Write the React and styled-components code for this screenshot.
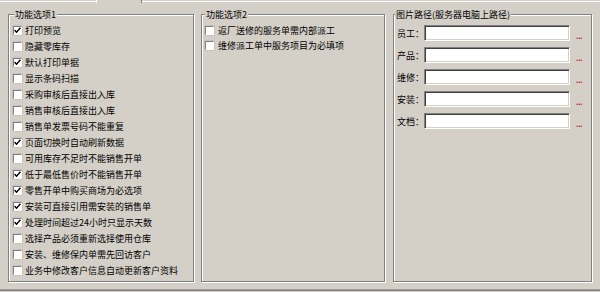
import React from 'react';
import styled, { createGlobalStyle } from 'styled-components';

const GlobalStyle = createGlobalStyle`
  html, body {
    margin: 0;
    padding: 0;
    background: #d4d0c8;
  }
  body {
    font-family: "Noto Sans CJK SC", "Liberation Sans", sans-serif;
    font-size: 9px;
    color: #000;
  }
`;

const Page = styled.div`
  width: 600px;
  height: 292px;
  background: #d4d0c8;
  display: flex;
  flex-direction: column;
  overflow: hidden;
`;

const TabEdge = styled.div`
  display: flex;
  height: 3px;
`;

const TabLine = styled.div`
  width: ${p => (p.$w ? `${p.$w}px` : 'auto')};
  flex: ${p => (p.$w ? 'none' : '1')};
  border-top: 1px solid #fff;
  margin-top: 1px;
`;

const TabGap = styled.div`
  width: 44px;
  border-left: 1px solid #fff;
  border-right: 1px solid #808080;
`;

const Groups = styled.div`
  display: flex;
  padding: 11px 0 0 8px;
  gap: 7px;
`;

const Group = styled.div`
  position: relative;
  box-sizing: border-box;
  width: ${p => p.$w}px;
  height: 268px;
  margin-right: ${p => p.$mr || 0}px;
  border: 1px solid #808080;
  box-shadow: 1px 1px 0 #fff, inset 1px 1px 0 #fff;
  padding: ${p => p.$pad};
  display: flex;
  flex-direction: column;
`;

const GroupTitle = styled.span`
  position: absolute;
  top: -6px;
  left: ${p => p.$left}px;
  padding: 0 1px;
  line-height: 11px;
  background: #d4d0c8;
  white-space: nowrap;
`;

const CheckRow = styled.label`
  display: flex;
  align-items: center;
  height: ${p => p.$h}px;
  gap: ${p => p.$gap}px;
  white-space: nowrap;
`;

const Box = styled.span`
  box-sizing: border-box;
  width: 9px;
  height: 9px;
  flex: none;
  background: #fff;
  border-top: 1px solid #808080;
  border-left: 1px solid #808080;
  border-right: 1px solid #fff;
  border-bottom: 1px solid #fff;
  box-shadow: 0 0 0 0.5px #b8b4ac;
  display: flex;
  align-items: center;
  justify-content: center;
`;

const PathRow = styled.div`
  display: flex;
  align-items: center;
  height: 22px;
`;

const PathLabel = styled.span`
  width: 27px;
  flex: none;
  white-space: nowrap;
`;

const PathInput = styled.div`
  box-sizing: border-box;
  width: 146px;
  height: 16px;
  flex: none;
  background: #fff;
  border-top: 1px solid #808080;
  border-left: 1px solid #808080;
  border-right: 1px solid #fff;
  border-bottom: 1px solid #fff;
  box-shadow: inset 1px 1px 0 #404040, inset -1px -1px 0 #d4d0c8;
`;

const Dots = styled.span`
  margin-left: 6px;
  padding-top: 5px;
  color: #c03040;
  font-size: 9px;
  font-weight: bold;
  letter-spacing: -0.5px;
  font-family: "Liberation Sans", sans-serif;
`;

const BottomEdge = styled.div`
  margin-top: 7px;
  height: 0;
  border-top: 1px solid #a09c94;
  border-bottom: 1px solid #808080;
`;

function Check({ on }) {
  return (
    <Box>
      {on && (
        <svg width="7" height="7" viewBox="0 0 7 7">
          <path d="M0.5 3 L2.5 5.2 L6.5 0.8" fill="none" stroke="#000" strokeWidth="1.4" />
        </svg>
      )}
    </Box>
  );
}

const options1 = [
  ['打印预览', true],
  ['隐藏零库存', false],
  ['默认打印单据', true],
  ['显示条码扫描', false],
  ['采购审核后直接出入库', false],
  ['销售审核后直接出入库', false],
  ['销售单发票号码不能重复', false],
  ['页面切换时自动刷新数据', true],
  ['可用库存不足时不能销售开单', false],
  ['低于最低售价时不能销售开单', true],
  ['零售开单中购买商场为必选项', true],
  ['安装可直接引用需安装的销售单', true],
  ['处理时间超过24小时只显示天数', true],
  ['选择产品必须重新选择使用仓库', false],
  ['安装、维修保内单需先回访客户', false],
  ['业务中修改客户信息自动更新客户资料', false],
];

const options2 = [
  ['返厂送修的服务单需内部派工', false],
  ['维修派工单中服务项目为必填项', false],
];

const paths = ['员工', '产品', '维修', '安装', '文档'];

export default function App() {
  return (
    <Page>
      <GlobalStyle />
      <TabEdge>
        <TabLine $w={96} />
        <TabGap />
        <TabLine />
      </TabEdge>
      <Groups>
        <Group $w={186} $pad="7px 0 0 4px">
          <GroupTitle $left={5}>功能选项1</GroupTitle>
          {options1.map(([t, on]) => (
            <CheckRow key={t} $h={16} $gap={3}>
              <Check on={on} />
              {t}
            </CheckRow>
          ))}
        </Group>
        <Group $w={184} $pad="8px 0 0 3px" $mr={1}>
          <GroupTitle $left={3}>功能选项2</GroupTitle>
          {options2.map(([t, on]) => (
            <CheckRow key={t} $h={15} $gap={4}>
              <Check on={on} />
              {t}
            </CheckRow>
          ))}
        </Group>
        <Group $w={199} $pad="7px 0 0 3px">
          <GroupTitle $left={1}>图片路径(服务器电脑上路径)</GroupTitle>
          {paths.map(p => (
            <PathRow key={p}>
              <PathLabel>{p}：</PathLabel>
              <PathInput />
              <Dots>...</Dots>
            </PathRow>
          ))}
        </Group>
      </Groups>
      <BottomEdge />
    </Page>
  );
}
